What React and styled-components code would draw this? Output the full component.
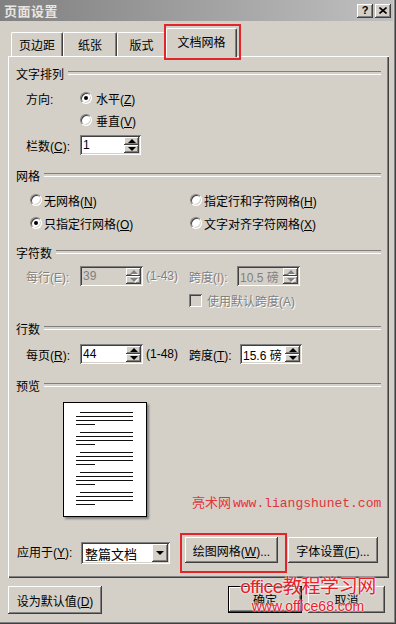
import React from 'react';
import styled, { createGlobalStyle } from 'styled-components';

const GlobalStyle = createGlobalStyle`
  html, body {
    margin: 0;
    background: #d4d0c8;
  }
  body {
    font-family: "Liberation Sans", "Noto Sans CJK SC", sans-serif;
    font-size: 12px;
    color: #000;
  }
  * { box-sizing: border-box; }
`;

const raised = `
  box-shadow: inset -1px -1px #404040, inset 1px 1px #ffffff, inset -2px -2px #808080, inset 2px 2px #d4d0c8;
`;

const sunken = `
  box-shadow: inset 1px 1px #808080, inset -1px -1px #ffffff, inset 2px 2px #404040, inset -2px -2px #d4d0c8;
`;

const Window = styled.div`
  position: relative;
  width: 396px;
  height: 624px;
  background: #d4d0c8;
  display: flex;
  flex-direction: column;
  padding: 0 3px 3px 0;
  box-shadow: inset -1px -1px #404040, inset -2px -2px #808080, inset -3px -3px #d4d0c8;
  overflow: hidden;
`;

const TitleBar = styled.div`
  height: 21px;
  flex: none;
  display: flex;
  align-items: center;
  justify-content: space-between;
  padding: 0 2px 0 4px;
  background: linear-gradient(to right, #808080, #c0c0c0);
`;

const Title = styled.span`
  color: #e8e6e0;
  font-weight: bold;
  font-size: 13px;
  letter-spacing: 0.5px;
`;

const TitleButtons = styled.div`
  display: flex;
  gap: 2px;
`;

const TitleButton = styled.div`
  width: 16px;
  height: 14px;
  background: #d4d0c8;
  ${raised}
  display: flex;
  align-items: center;
  justify-content: center;
  font-weight: bold;
  font-size: 11px;
  line-height: 1;
`;

const Body = styled.div`
  flex: 1;
  display: flex;
  flex-direction: column;
  padding: 0 4px 0 8px;
`;

const TabRow = styled.div`
  height: 35px;
  display: flex;
  align-items: flex-end;
  padding-left: 3px;
`;

const TabSlot = styled.div`
  position: relative;
  display: flex;
  align-items: flex-end;
  z-index: ${p => (p.$active ? 2 : 1)};
`;

const Tab = styled.div`
  width: ${p => p.$w}px;
  height: ${p => (p.$active ? 29 : 24)}px;
  margin-bottom: ${p => (p.$active ? -1 : 0)}px;
  background: #d4d0c8;
  display: flex;
  align-items: center;
  justify-content: center;
  padding-bottom: ${p => (p.$active ? 3 : 0)}px;
  border-top: 1px solid #fff;
  border-left: 1px solid #fff;
  border-right: 1px solid #404040;
  box-shadow: inset -1px 0 #808080;
  border-radius: 2px 2px 0 0;
`;

const RedBox = styled.div`
  position: absolute;
  left: ${p => p.$l}px;
  top: ${p => p.$t}px;
  width: ${p => p.$w}px;
  height: ${p => p.$h}px;
  border: 2px solid #e0262b;
  pointer-events: none;
  z-index: 5;
`;

const Panel = styled.div`
  position: relative;
  height: 522px;
  flex: none;
  display: flex;
  flex-direction: column;
  padding: 10px 8px 14px 8px;
  box-shadow: inset 1px 1px #ffffff, inset -1px -1px #404040, inset -2px -2px #808080;
`;

const GroupHeader = styled.div`
  display: flex;
  align-items: center;
  height: 14px;
  gap: 4px;
  margin-top: ${p => p.$mt || 0}px;
  &::after {
    content: '';
    flex: 1;
    height: 2px;
    border-top: 1px solid #808080;
    border-bottom: 1px solid #ffffff;
  }
`;

const Row = styled.div`
  display: flex;
  align-items: ${p => p.$align || 'center'};
  height: ${p => p.$h || 20}px;
  margin-top: ${p => p.$mt || 0}px;
  padding-left: ${p => p.$indent || 0}px;
  white-space: nowrap;
`;

const Text = styled.span`
  flex: none;
  width: ${p => (p.$w ? `${p.$w}px` : 'auto')};
  color: ${p => (p.$disabled ? '#808080' : '#000')};
  text-shadow: ${p => (p.$disabled ? '1px 1px 0 #ffffff' : 'none')};
  ${p => (p.$self ? `align-self: ${p.$self}; line-height: 22px;` : '')}
`;

const Option = styled.label`
  flex: none;
  display: flex;
  align-items: center;
  gap: ${p => p.$gap || 2}px;
  width: ${p => (p.$w ? `${p.$w}px` : 'auto')};
  color: ${p => (p.$disabled ? '#808080' : '#000')};
  text-shadow: ${p => (p.$disabled ? '1px 1px 0 #ffffff' : 'none')};
`;

const Radio = styled.span`
  position: relative;
  width: 12px;
  height: 12px;
  flex: none;
  border-radius: 50%;
  background: #fff;
  border: 1px solid;
  border-color: #808080 #ffffff #ffffff #808080;
  box-shadow: inset 1px 1px #404040, inset -1px -1px #d4d0c8;
  &::after {
    content: '';
    display: ${p => (p.$checked ? 'block' : 'none')};
    position: absolute;
    left: 3px;
    top: 3px;
    width: 4px;
    height: 4px;
    border-radius: 50%;
    background: #000;
  }
`;

const Check = styled.span`
  width: 13px;
  height: 13px;
  flex: none;
  background: ${p => (p.$disabled ? '#d4d0c8' : '#fff')};
  ${sunken}
`;

const SpinBox = styled.div`
  flex: none;
  width: ${p => p.$w}px;
  height: 20px;
  display: flex;
  padding: 2px;
  background: ${p => (p.$disabled ? '#d4d0c8' : '#fff')};
  ${sunken}
`;

const SpinValue = styled.span`
  flex: 1;
  display: flex;
  align-items: center;
  padding-left: 1px;
  font-size: 12px;
  color: ${p => (p.$disabled ? '#808080' : '#000')};
  overflow: hidden;
  white-space: nowrap;
`;

const SpinButtons = styled.div`
  width: 15px;
  flex: none;
  display: flex;
  flex-direction: column;
`;

const SpinButton = styled.div`
  flex: 1;
  background: #d4d0c8;
  ${raised}
  display: flex;
  align-items: center;
  justify-content: center;
  &::after {
    content: '';
    width: 0;
    height: 0;
    border-left: 4px solid transparent;
    border-right: 4px solid transparent;
    ${p => (p.$down ? 'border-top' : 'border-bottom')}: 4px solid ${p => (p.$disabled ? '#808080' : '#000')};
    filter: ${p => (p.$disabled ? 'drop-shadow(1px 1px 0 #fff)' : 'none')};
  }
`;

const Gap = styled.span`
  flex: none;
  width: ${p => p.$w}px;
`;

const PreviewPage = styled.div`
  width: 84px;
  height: 115px;
  margin-top: 10px;
  margin-left: 47px;
  background: #fff;
  border: 1px solid #000;
  box-shadow: 2px 2px 2px #808080;
  padding: 9px 0 0 12px;
  display: flex;
  flex-direction: column;
  gap: 7px;
`;

const LineGroup = styled.div`
  display: flex;
  flex-direction: column;
  gap: 3px;
`;

const PageLine = styled.div`
  height: 1px;
  background: #111;
  width: ${p => p.$w}px;
  margin-left: ${p => p.$ml || 0}px;
`;

const SiteMark = styled.div`
  position: absolute;
  left: 184px;
  top: 438px;
  color: #e0343a;
  line-height: 16px;
  white-space: nowrap;
  display: flex;
  align-items: baseline;
  gap: 2px;
`;

const SiteMarkCn = styled.span`
  font-family: "Noto Sans CJK SC", sans-serif;
  font-size: 13px;
`;

const SiteMarkUrl = styled.span`
  font-family: "Liberation Mono", monospace;
  font-size: 13px;
`;

const SelectBox = styled.div`
  flex: none;
  width: 89px;
  height: 22px;
  display: flex;
  padding: 2px;
  background: #fff;
  ${sunken}
`;

const SelectValue = styled.span`
  flex: 1;
  display: flex;
  align-items: center;
  padding-left: 2px;
  font-size: 13px;
`;

const DropButton = styled.div`
  width: 16px;
  background: #d4d0c8;
  ${raised}
  display: flex;
  align-items: center;
  justify-content: center;
  &::after {
    content: '';
    border-left: 4px solid transparent;
    border-right: 4px solid transparent;
    border-top: 4px solid #000;
  }
`;

const ButtonSlot = styled.div`
  position: relative;
  flex: none;
  margin-left: ${p => p.$ml || 0}px;
  margin-bottom: ${p => p.$mb || 0}px;
`;

const Button = styled.div`
  width: ${p => p.$w}px;
  height: ${p => p.$h || 26}px;
  background: #d4d0c8;
  display: flex;
  align-items: center;
  justify-content: center;
  white-space: nowrap;
  ${raised}
  ${p => (p.$default ? 'border: 1px solid #000;' : '')}
`;

const Footer = styled.div`
  display: flex;
  align-items: flex-start;
  margin-top: 8px;
  height: 27px;
`;

const BottomMark = styled.div`
  position: absolute;
  left: 240px;
  top: 575px;
  width: 136px;
  display: flex;
  flex-direction: column;
  align-items: center;
  color: #e8202a;
  pointer-events: none;
  z-index: 6;
  white-space: nowrap;
  text-shadow: 0 0 2px #ffffff, 0 0 2px #ffffff;
`;

const BottomMarkBig = styled.span`
  font-family: "Liberation Sans", "Noto Sans CJK SC", sans-serif;
  font-size: 19px;
  line-height: 24px;
  letter-spacing: -0.4px;
`;

const BottomMarkSmall = styled.span`
  font-family: "Liberation Sans", sans-serif;
  font-size: 14px;
  line-height: 15px;
`;

function Spin({ value, w, disabled }) {
  return (
    <SpinBox $w={w} $disabled={disabled}>
      <SpinValue $disabled={disabled}>{value}</SpinValue>
      <SpinButtons>
        <SpinButton $disabled={disabled} />
        <SpinButton $down $disabled={disabled} />
      </SpinButtons>
    </SpinBox>
  );
}

function RadioOption({ checked, w, gap, children }) {
  return (
    <Option $w={w} $gap={gap}>
      <Radio $checked={checked} />
      <span>{children}</span>
    </Option>
  );
}

const groups = [0, 1, 2, 3, 4];

function App() {
  return (
    <Window>
      <GlobalStyle />
      <TitleBar>
        <Title>页面设置</Title>
        <TitleButtons>
          <TitleButton>?</TitleButton>
          <TitleButton>
            <svg width="8" height="7" viewBox="0 0 8 7">
              <path d="M0.5 0.5 L7.5 6.5 M7.5 0.5 L0.5 6.5" stroke="#000" strokeWidth="1.6" />
            </svg>
          </TitleButton>
        </TitleButtons>
      </TitleBar>

      <Body>
        <TabRow>
          <TabSlot><Tab $w={52}>页边距</Tab></TabSlot>
          <TabSlot><Tab $w={54}>纸张</Tab></TabSlot>
          <TabSlot><Tab $w={49}>版式</Tab></TabSlot>
          <TabSlot $active>
            <Tab $w={71} $active>文档网格</Tab>
            <RedBox $l={-2} $t={-4} $w={77} $h={36} />
          </TabSlot>
        </TabRow>

        <Panel>
          <GroupHeader>文字排列</GroupHeader>
          <Row $mt={8} $indent={10}>
            <Text $w={54}>方向:</Text>
            <RadioOption checked gap={4}>水平(<u>Z</u>)</RadioOption>
          </Row>
          <Row $mt={2} $indent={64}>
            <RadioOption gap={4}>垂直(<u>V</u>)</RadioOption>
          </Row>
          <Row $mt={5} $indent={10}>
            <Text $w={54}>栏数(<u>C</u>):</Text>
            <Spin value="1" w={61} />
          </Row>

          <GroupHeader $mt={13}>网格</GroupHeader>
          <Row $mt={8} $indent={14}>
            <RadioOption w={160}>无网格(<u>N</u>)</RadioOption>
            <RadioOption>指定行和字符网格(<u>H</u>)</RadioOption>
          </Row>
          <Row $mt={3} $indent={14}>
            <RadioOption checked w={160}>只指定行网格(<u>O</u>)</RadioOption>
            <RadioOption>文字对齐字符网格(<u>X</u>)</RadioOption>
          </Row>

          <GroupHeader $mt={12}>字符数</GroupHeader>
          <Row $mt={7} $indent={10}>
            <Text $w={54} $disabled>每行(E):</Text>
            <Spin value="39" w={63} disabled />
            <Gap $w={3} />
            <Text $w={43} $disabled>(1-43)</Text>
            <Text $w={48} $disabled>跨度(I):</Text>
            <Spin value="10.5 磅" w={63} disabled />
          </Row>
          <Row $mt={4} $indent={173}>
            <Option $gap={5} $disabled><Check $disabled /><span>使用默认跨度(A)</span></Option>
          </Row>

          <GroupHeader $mt={11}>行数</GroupHeader>
          <Row $mt={9} $indent={10}>
            <Text $w={54}>每页(<u>R</u>):</Text>
            <Spin value="44" w={63} />
            <Gap $w={3} />
            <Text $w={43}>(1-48)</Text>
            <Text $w={51}>跨度(<u>T</u>):</Text>
            <Spin value="15.6 磅" w={62} />
          </Row>

          <GroupHeader $mt={14}>预览</GroupHeader>
          <PreviewPage>
            {groups.map(g => (
              <LineGroup key={g}>
                <PageLine $w={53} $ml={4} />
                <PageLine $w={57} />
                <PageLine $w={57} />
                <PageLine $w={19} />
              </LineGroup>
            ))}
          </PreviewPage>

          <SiteMark>
            <SiteMarkCn>亮术网</SiteMarkCn>
            <SiteMarkUrl>www.liangshunet.com</SiteMarkUrl>
          </SiteMark>

          <Row $mt={20} $h={27} $indent={1} $align="flex-end">
            <Text $w={64} $self="flex-end">应用于(<u>Y</u>):</Text>
            <SelectBox>
              <SelectValue>整篇文档</SelectValue>
              <DropButton />
            </SelectBox>
            <ButtonSlot $ml={15} $mb={1}>
              <Button $w={93}><span>绘图网格(<u>W</u>)...</span></Button>
              <RedBox $l={-5} $t={-4} $w={107} $h={40} />
            </ButtonSlot>
            <ButtonSlot $ml={10} $mb={1}>
              <Button $w={90}><span>字体设置(<u>F</u>)...</span></Button>
            </ButtonSlot>
          </Row>
        </Panel>

        <Footer>
          <ButtonSlot>
            <Button $w={94} $h={28}><span>设为默认值(<u>D</u>)</span></Button>
          </ButtonSlot>
          <ButtonSlot $ml={126}>
            <Button $w={74} $h={27} $default>确定</Button>
          </ButtonSlot>
          <ButtonSlot $ml={6}>
            <Button $w={77} $h={27}>取消</Button>
          </ButtonSlot>
        </Footer>
      </Body>

      <BottomMark>
        <BottomMarkBig>office教程学习网</BottomMarkBig>
        <BottomMarkSmall>www.office68.com</BottomMarkSmall>
      </BottomMark>
    </Window>
  );
}

export default App;
